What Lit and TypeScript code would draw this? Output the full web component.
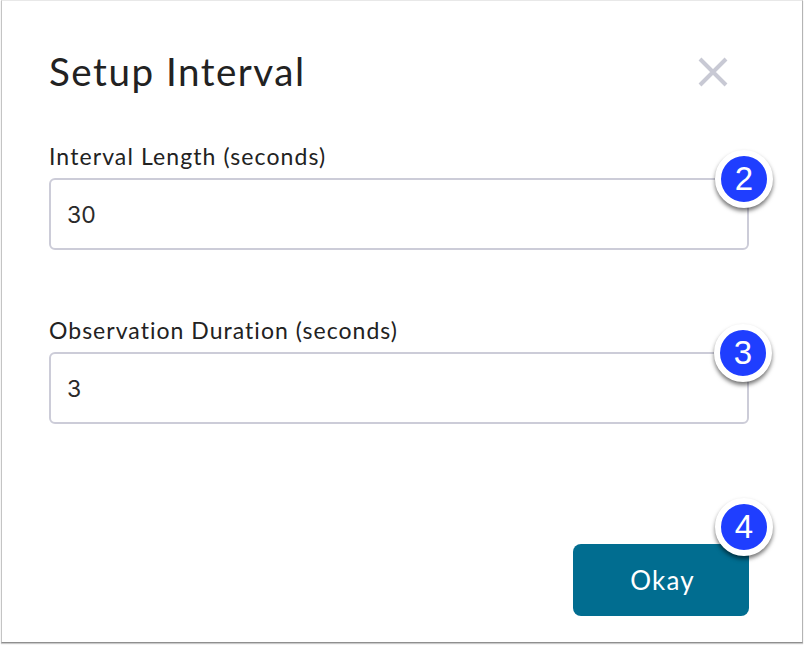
import { LitElement, html, css } from "lit";
import { customElement } from "lit/decorators.js";

@customElement("app-root")
export class AppRoot extends LitElement {
  static styles = css`
    :host { display: block; width: 804px; height: 646px; background: #fff; font-family: "Lato", "Liberation Sans", sans-serif; color: #222; }
    .dialog { box-sizing: border-box; width: 802px; height: 643px; margin-left: 1px; border-left: 1px solid #c4c4c4; border-top: 1px solid #e8e8e8; border-right: 1px solid #b4b4b4; border-bottom: 1px solid #8f8f8f; box-shadow: 0 1px 1px #c9c9c9; padding: 0 53px 0 47px; display: flex; flex-direction: column; }
    header { display: flex; justify-content: space-between; align-items: center; height: 140px; }
    h1 { margin: 0; font-size: 38.6px; font-weight: 400; letter-spacing: 1.5px; line-height: 46px; }
    .close { display: block; width: 30px; height: 30px; margin: 2px 21px 0 0; }
    .field { display: flex; flex-direction: column; position: relative; }
    .field + .field { margin-top: 65px; }
    label { font-size: 23px; letter-spacing: 1.1px; line-height: 30px; height: 37px; color: #222; }
    .field.second label { letter-spacing: 1.03px; }
    .input { box-sizing: border-box; height: 72px; border: 2px solid #ccccd8; border-radius: 6px; padding: 2px 16px 0; display: flex; align-items: center; font-family: "Inter", sans-serif; font-size: 23px; color: #2a2a2a; }
    .badge { position: absolute; box-sizing: border-box; width: 58px; height: 58px; border-radius: 50%; background: #1f3eff; border: 6px solid #fff; box-shadow: 0 3px 4px rgba(0,0,0,.55); color: #fff; font-family: "Liberation Sans", sans-serif; font-size: 33px; display: flex; align-items: center; justify-content: center; }
    .field .badge { right: -24px; top: 9px; }
    .field.second .badge { right: -23px; top: 9px; }
    footer { margin-top: auto; margin-bottom: 26px; display: flex; justify-content: flex-end; }
    .btn-wrap { position: relative; }
    button { display: block; width: 176px; height: 72px; border: 0; border-radius: 8px; background: #016d90; color: #fff; font-family: "Lato", sans-serif; font-size: 26px; letter-spacing: 1.2px; padding: 0 0 0 3px; }
    .btn-wrap .badge { right: -24px; top: -46px; }
  `;
  render() {
    return html`<div class="dialog">
      <header>
        <h1>Setup Interval</h1>
        <svg class="close" viewBox="0 0 30 30"><path d="M2 2 L28 28 M28 2 L2 28" stroke="#c8c9d4" stroke-width="4" fill="none"/></svg>
      </header>
      <div class="field"><label>Interval Length (seconds)</label><div class="input">30</div><span class="badge">2</span></div>
      <div class="field second"><label>Observation Duration (seconds)</label><div class="input">3</div><span class="badge">3</span></div>
      <footer><div class="btn-wrap"><button>Okay</button><span class="badge">4</span></div></footer>
    </div>`;
  }
}
